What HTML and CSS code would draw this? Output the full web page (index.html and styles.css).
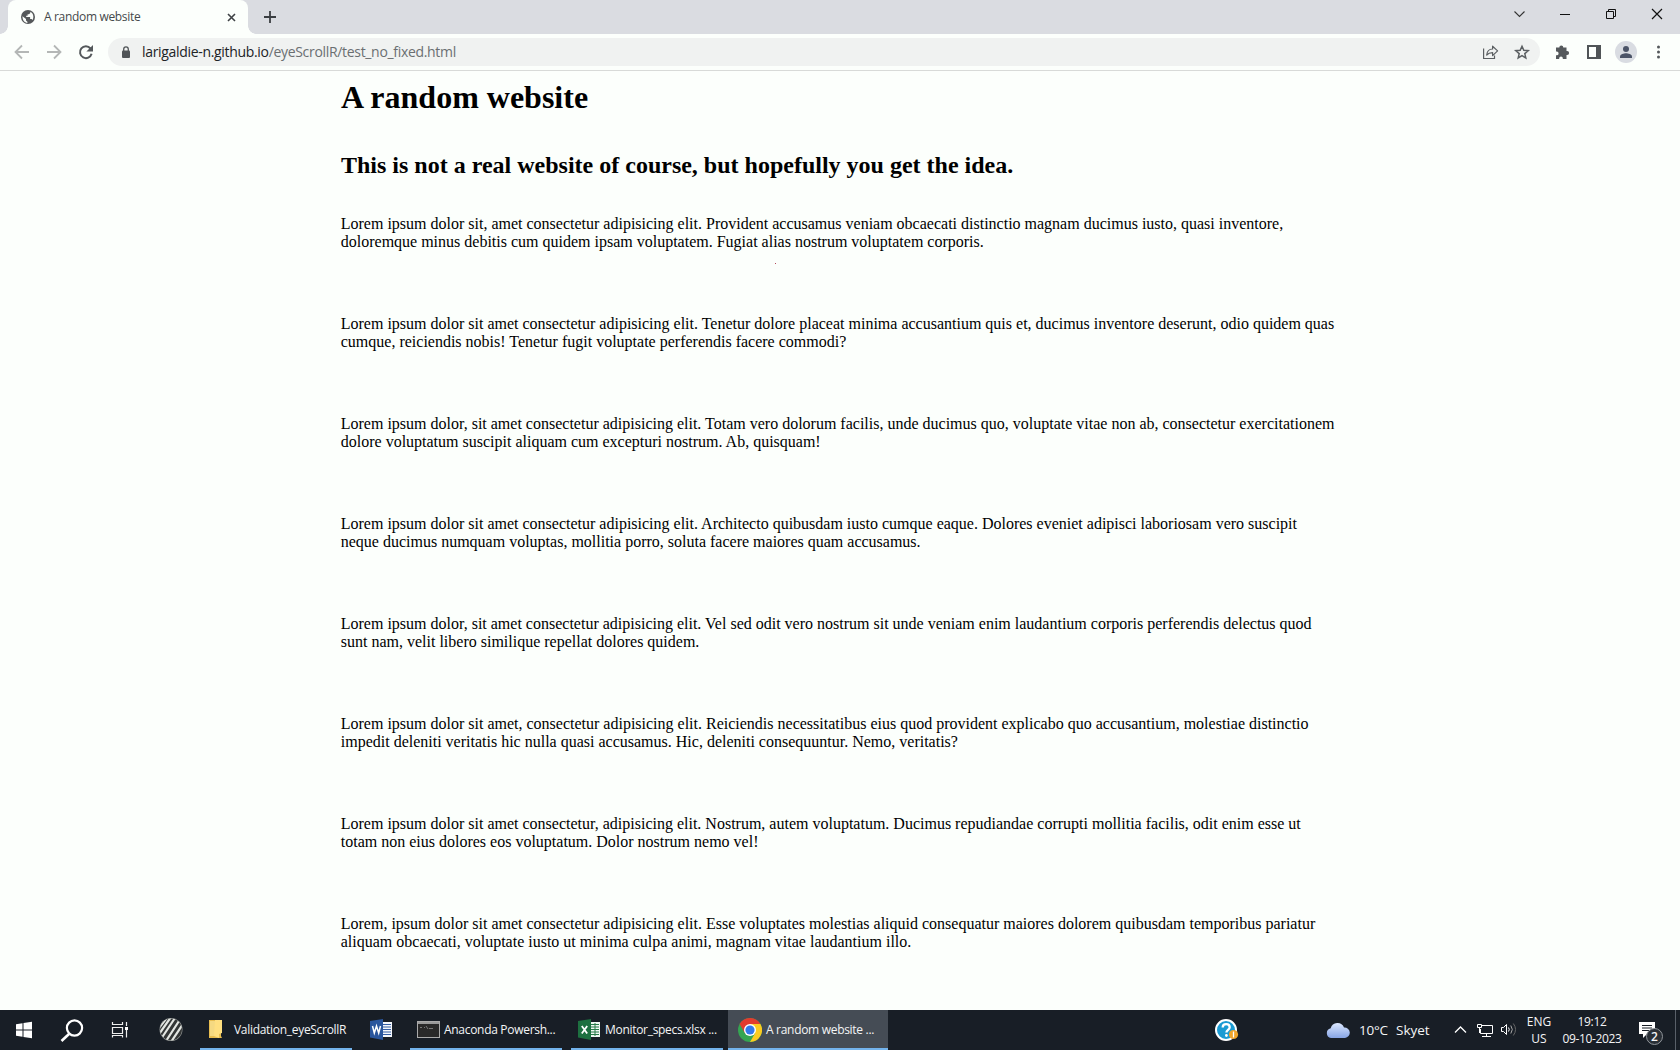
FILE: index.html
```html
<!DOCTYPE html>
<html lang="en">
<head>
<meta charset="utf-8">
<title>A random website</title>
<link rel="stylesheet" href="styles.css">
</head>
<body>
<header class="browser">
  <div class="tabstrip">
    <div class="tab">
      <svg class="globe" width="14" height="14" viewBox="0 0 14 14"><circle cx="7" cy="7" r="7" fill="#55585a"/><path d="M1.5 6.2 5 9v1.6l1.4 1.2v1.1C3.500 12.500 1.300 10 1.500 6.200ZM9.300 1.800v1.300L8 4.300H6.600v1.500H5.200v1.100h3.900v2h1.500l1 1.200c1.500-2.800.9-6.700-2.300-8.300Z" fill="#fbfefb"/></svg>
      <span class="tab-title">A random website</span>
      <svg class="tab-close" width="9" height="9" viewBox="0 0 9 9"><path d="m1 1 7 7M8 1 1 8" stroke="#3e4245" stroke-width="1.6"/></svg>
    </div>
    <svg class="newtab" width="12" height="12" viewBox="0 0 12 12"><path d="M6 0v12M0 6h12" stroke="#3a3e42" stroke-width="1.8"/></svg>
    <div class="window-controls">
      <svg width="46" height="28" viewBox="0 0 46 28"><path d="m18.500 11.500 5 5 5-5" fill="none" stroke="#333" stroke-width="1.100"/></svg>
      <svg width="46" height="28" viewBox="0 0 46 28"><path d="M18 14.500h10" stroke="#111"/></svg>
      <svg width="46" height="28" viewBox="0 0 46 28"><path d="M18.500 11.500h7v7h-7zM20.500 11.500v-2h7v7h-2" fill="none" stroke="#111"/></svg>
      <svg width="46" height="28" viewBox="0 0 46 28"><path d="m18 9 10 10M28 9 18 19" stroke="#111" stroke-width="1.200"/></svg>
    </div>
  </div>
  <div class="toolbar">
    <svg class="nav" width="96" height="36" viewBox="0 0 96 36" fill="none" stroke-width="1.800">
      <path d="M29 18H16M22 11.500 15.500 18l6.500 6.500" stroke="#b4b7b6"/>
      <path d="M47 18h13M54 11.500l6.500 6.500-6.500 6.500" stroke="#b4b7b6"/>
      <path d="M90.500 14.500a5.900 5.900 0 1 0 1.100 5.300" stroke="#54585b" stroke-width="2"/><path d="M93 11v6.600h-6.600Z" fill="#54585b"/>
    </svg>
    <div class="omnibox">
      <svg width="10" height="13" viewBox="0 0 10 13"><rect x="1" y="4.500" width="8" height="7.500" rx="1" fill="#505457"/><path d="M2.700 5V3.200a2.300 2.300 0 0 1 4.600 0V5" fill="none" stroke="#505457" stroke-width="1.300"/></svg>
      <span class="url"><span class="host">larigaldie-n.github.io</span>/eyeScrollR/test_no_fixed.html</span>
      <svg class="omni-icons" width="50" height="28" viewBox="0 0 50 28" fill="none" stroke="#5a5e61"><path d="M.6 10.500v10h10.900v-3" stroke-width="1.200"/><path d="M3.700 17c.4-4.200 2.500-6 5.900-6V8.200l5 4.700-5 4.700v-3c-2.600 0-4.400.6-5.900 2.400Z" stroke-width="1.200" stroke-linejoin="round"/><path d="m39 8.300 1.800 4 4.400.4-3.400 2.900 1 4.300-3.800-2.300-3.800 2.300 1-4.300-3.400-2.900 4.400-.4Z" stroke-width="1.500"/></svg>
    </div>
    <svg class="actions" width="140" height="36" viewBox="0 0 140 36">
      <path d="M16 13.500h3.300a2 2 0 1 1 4 0h3.200V17h.6a2 2 0 1 1 0 4h-.6v4h-3.700v-.7a1.800 1.800 0 0 0-3.600 0v.7H16v-3.700h.7a1.900 1.900 0 0 0 0-3.800H16Z" fill="#55595c"/>
      <path d="M48 12h12v12H48z" fill="none" stroke="#505457" stroke-width="2"/><path d="M56 11h5v14h-5z" fill="#505457"/>
      <circle cx="86" cy="18" r="11" fill="#d9dce2"/><circle cx="86" cy="15" r="3" fill="#4b5467"/><path d="M80 24v-1.500c0-2.400 4-3.300 6-3.300s6 .9 6 3.300V24Z" fill="#4b5467"/>
      <g fill="#54585b"><circle cx="118.500" cy="13" r="1.500"/><circle cx="118.500" cy="18" r="1.500"/><circle cx="118.500" cy="23" r="1.500"/></g>
    </svg>
  </div>
</header>
<main class="page">
  <h1>A random website</h1>
  <h2>This is not a real website of course, but hopefully you get the idea.</h2>
  <p>Lorem ipsum dolor sit, amet consectetur adipisicing elit. Provident accusamus veniam obcaecati distinctio magnam ducimus iusto, quasi inventore,<br>doloremque minus debitis cum quidem ipsam voluptatem. Fugiat alias nostrum voluptatem corporis.<i class="gaze"></i></p>
  <p>Lorem ipsum dolor sit amet consectetur adipisicing elit. Tenetur dolore placeat minima accusantium quis et, ducimus inventore deserunt, odio quidem quas<br>cumque, reiciendis nobis! Tenetur fugit voluptate perferendis facere commodi?</p>
  <p>Lorem ipsum dolor, sit amet consectetur adipisicing elit. Totam vero dolorum facilis, unde ducimus quo, voluptate vitae non ab, consectetur exercitationem<br>dolore voluptatum suscipit aliquam cum excepturi nostrum. Ab, quisquam!</p>
  <p>Lorem ipsum dolor sit amet consectetur adipisicing elit. Architecto quibusdam iusto cumque eaque. Dolores eveniet adipisci laboriosam vero suscipit<br>neque ducimus numquam voluptas, mollitia porro, soluta facere maiores quam accusamus.</p>
  <p>Lorem ipsum dolor, sit amet consectetur adipisicing elit. Vel sed odit vero nostrum sit unde veniam enim laudantium corporis perferendis delectus quod<br>sunt nam, velit libero similique repellat dolores quidem.</p>
  <p>Lorem ipsum dolor sit amet, consectetur adipisicing elit. Reiciendis necessitatibus eius quod provident explicabo quo accusantium, molestiae distinctio<br>impedit deleniti veritatis hic nulla quasi accusamus. Hic, deleniti consequuntur. Nemo, veritatis?</p>
  <p>Lorem ipsum dolor sit amet consectetur, adipisicing elit. Nostrum, autem voluptatum. Ducimus repudiandae corrupti mollitia facilis, odit enim esse ut<br>totam non eius dolores eos voluptatum. Dolor nostrum nemo vel!</p>
  <p>Lorem, ipsum dolor sit amet consectetur adipisicing elit. Esse voluptates molestias aliquid consequatur maiores dolorem quibusdam temporibus pariatur<br>aliquam obcaecati, voluptate iusto ut minima culpa animi, magnam vitae laudantium illo.</p>
</main>
<footer class="taskbar">
  <svg width="200" height="40" viewBox="0 0 200 40">
    <path d="m16 14.200 6.500-1v6.300H16zM23.500 13l8.500-1.200v7.700h-8.500zM16 20.500h6.500v6.300l-6.500-1zM23.500 20.500H32v7.700L23.500 27z" fill="#fff"/>
    <circle cx="74.500" cy="18" r="7.600" fill="none" stroke="#fff" stroke-width="2.200"/><path d="m69 24-7.500 7" stroke="#fff" stroke-width="2.600"/>
    <g fill="none" stroke="#eee" stroke-width="1.200"><path d="M112.500 15v-3M122.500 15v-3M112.500 14.500h10M112.500 17.500h10v6h-10zM112.500 27.500v-2h10v2M126.500 12v4M126.500 20v7.500"/></g><path d="M125 17h3v3h-3z" fill="#fff"/>
    <defs><clipPath id="disc"><circle cx="171" cy="19.500" r="11"/></clipPath></defs>
    <circle cx="171" cy="19.500" r="11.500" fill="#8d918f"/><g clip-path="url(#disc)"><circle cx="171" cy="19.500" r="11" fill="#333636"/><path d="m156 22 13-17M157 27l14-20M161 29l14-21M166 31l13-20M171 32l12-18" stroke="#e3e6e2" stroke-width="2.200"/></g>
  </svg>
  <div class="task folder">
    <svg width="14" height="20" viewBox="0 0 14 20"><path d="M0 1h12v16l1 2H0z" fill="#e8bd50"/><path d="M1 2h6v15H1z" fill="#f5d982"/><path d="M6 1h7v13l-3 1v4l-5-2z" fill="#ffdf80"/></svg>
    <span>Validation_eyeScrollR</span>
  </div>
  <div class="word"><svg width="22" height="21" viewBox="0 0 22 21"><path d="M11 3h11v15H11z" fill="#f4f7fc"/><path d="M13 5.500h8M13 8h8M13 10.500h8M13 13h8M13 15.500h8" stroke="#345ea5"/><path d="M0 2 13 0v21L0 18.500z" fill="#2a569d"/><path d="m2.500 7 1.800 7 2.200-7 2.200 7 1.800-7" fill="none" stroke="#fff" stroke-width="1.500"/></svg></div>
  <div class="task conda">
    <svg width="23" height="17" viewBox="0 0 23 17"><rect x=".5" y=".5" width="22" height="16" fill="#292929" stroke="#aaa"/><path d="M1 1h21v2H1z" fill="#999"/><path d="M3 6.500h2M7 6.500h1M9 5l2 3M12 7.500h4" stroke="#777"/></svg>
    <span>Anaconda Powersh...</span>
  </div>
  <div class="task excel">
    <svg width="22" height="21" viewBox="0 0 22 21"><path d="M11 3h11v15H11z" fill="#eef8f1"/><path d="M13 5.500h8M13 8h8M13 10.500h8M13 13h8M13 15.500h8M17 4v13" stroke="#277b48"/><path d="M0 2 13 0v21L0 18.500z" fill="#1d7040"/><path d="m3.800 7 5.400 7.500M9.200 7l-5.400 7.500" stroke="#fff" stroke-width="1.800"/></svg>
    <span>Monitor_specs.xlsx ...</span>
  </div>
  <div class="task chrome">
    <svg width="24" height="24" viewBox="0 0 24 24"><circle cx="12" cy="12" r="12" fill="#35a552"/><path d="M12 12 1.600 6A12 12 0 0 1 22.400 6Z" fill="#e33b2e"/><path d="M12 6h10.400A12 12 0 0 1 12 24l5.200-9Z" fill="#fbcb20"/><path d="m1.600 6 5.200 9L12 6Z" fill="#e33b2e"/><circle cx="12" cy="12" r="6" fill="#fff"/><circle cx="12" cy="12" r="4.600" fill="#3479ea"/></svg>
    <span>A random website ...</span>
  </div>
  <div class="tray">
    <svg class="help" width="25" height="24" viewBox="0 0 25 24"><circle cx="11" cy="12" r="10" fill="#1b9bd3" stroke="#fff" stroke-width="2"/><path d="M7.700 9.500c0-4.500 7-4.300 7-.2 0 2.500-3.300 2.700-3.300 5.200" fill="none" stroke="#fff" stroke-width="2.300"/><circle cx="11.400" cy="17.500" r="1.400" fill="#fff"/><circle cx="18.500" cy="16.500" r="4.600" fill="#f0a52b"/><path d="M18.500 13.500v6" stroke="#fff" stroke-width="1.300"/></svg>
    <svg class="cloud" width="24" height="16" viewBox="0 0 24 16"><defs><linearGradient id="sky" x2="0" y2="1"><stop stop-color="#dce8ff"/><stop offset="1" stop-color="#86a4e4"/></linearGradient></defs><path d="M5 16a5 5 0 0 1-.3-9.800A7 7 0 0 1 18 5.500 5.200 5.200 0 0 1 19 16Z" fill="url(#sky)"/></svg>
    <span class="temp">10°C</span><span class="sky">Skyet</span>
    <svg class="status" width="64" height="40" viewBox="0 0 64 40" fill="none" stroke="#fff"><path d="m1 22.500 5.500-5.500 5.500 5.500" stroke-width="1.300"/><path d="M28 15.500h10.500v8H26.500V19M32.500 23.500v3M28 26.500h9M23.500 14.500h4v3h-4zM25.500 18v5"/><path d="M47.500 17.500h2l3-3v10l-3-3h-2zM54.500 17.500q1.500 2 0 4"/><path d="M56.800 15.500q3 4 0 8" stroke="#aaa"/><path d="M59.300 13.500q4.500 6 0 12" stroke="#666"/></svg>
    <div class="lang"><span>ENG</span><span>US</span></div>
    <div class="clock"><span class="time">19:12</span><span class="date">09-10-2023</span></div>
    <div class="notes"><svg width="16" height="16" viewBox="0 0 16 16"><path d="M0 0h16v12H8l-4 4v-4H0z" fill="#fff"/><path d="M3 3.500h10M3 6h10M3 8.500h7" stroke="#171d25"/></svg><b>2</b></div>
    <i class="show-desktop"></i>
  </div>
</footer>
</body>
</html>
```
FILE: styles.css
```css
* { box-sizing: border-box; }
body { margin: 0; width: 1680px; height: 1050px; overflow: hidden; display: flex; flex-direction: column; background: #fcfffc; font: 12px/16px "Open Sans", "Noto Sans", sans-serif; }
svg { display: block; flex: none; }
span { white-space: nowrap; }
.browser, .taskbar { flex: none; }
.tabstrip { height: 34px; background: #dadce1; display: flex; padding-left: 8px; }
.tab { width: 240px; height: 34px; background: #fcfffc; border-radius: 8px 8px 0 0; display: flex; align-items: center; padding: 0 12px 0 13px; position: relative; }
.tab::before, .tab::after { content: ""; position: absolute; bottom: 0; width: 8px; height: 8px; }
.tab::before { left: -8px; background: radial-gradient(circle at 0 0, transparent 7.500px, #fcfffc 8px); }
.tab::after { right: -8px; background: radial-gradient(circle at 100% 0, transparent 7.500px, #fcfffc 8px); }
.tab-title { margin-left: 9px; font-size: 12px; letter-spacing: -.33px; color: #45494b; }
.tab-close { margin-left: auto; }
.newtab { margin: 11px 0 0 16px; }
.window-controls { display: flex; margin-left: auto; }
.toolbar { height: 37px; border-bottom: 1px solid #d8dad8; display: flex; }
.nav { margin-right: 12px; }
.omnibox { width: 1432px; height: 28px; margin-top: 4px; border-radius: 14px; background: #f0f2f1; display: flex; align-items: center; padding-left: 13px; }
.url { margin-left: 11px; font-size: 14px; letter-spacing: -.32px; color: #6b6f71; }
.host { color: #202326; }
.omni-icons { margin-left: auto; margin-right: 7px; }
.page { flex: 1; min-height: 0; overflow: hidden; padding: 8px 0 0 341px; font: 16px/18px "Liberation Serif", "Times New Roman", serif; color: #000; }
h1 { margin: 0; font-size: 32px; line-height: 37px; }
h2 { margin: 35px 0 36px; font-size: 24px; line-height: 28px; }
p { margin: 0 0 0 -.25px; height: 100px; white-space: nowrap; position: relative; }
.gaze { position: absolute; left: 434.250px; top: 48px; width: 1px; height: 1px; background: #b64a5c; }
.taskbar { height: 40px; background: #181e26; display: flex; color: #f4f5f6; }
.task { height: 40px; width: 152px; border-bottom: 2px solid #73b3ec; display: flex; align-items: center; letter-spacing: -.3px; }
.task span { padding-top: 2px; }
.folder { padding-left: 9px; }
.folder span { margin-left: 11px; }
.word { width: 58px; padding: 9px 0 0 18px; }
.conda { padding-left: 7px; margin-right: 9px; }
.conda span { margin-left: 4px; }
.excel { padding-left: 7px; margin-right: 5px; }
.excel span { margin-left: 5px; }
.chrome { width: 160px; background: #454c55; padding-left: 10px; }
.chrome svg { margin-top: 2px; }
.chrome span { margin-left: 4px; }
.tray { flex: 1; display: flex; align-items: center; }
.help { margin-left: 327px; }
.cloud { margin-left: 86px; }
.temp { margin-left: 9px; width: 37px; font-size: 13.500px; letter-spacing: -.2px; }
.sky { width: 58px; font-size: 13.500px; }
.lang, .clock { display: flex; flex-direction: column; align-items: center; line-height: 17px; }
.lang { width: 24px; margin-left: 9px; }
.clock { width: 60px; margin-left: 11px; letter-spacing: -.35px; }
.notes { position: relative; margin-left: 17px; }
.notes b { position: absolute; left: 7px; top: 6px; width: 17px; height: 17px; border: 1px solid #90959a; border-radius: 50%; background: #292f36; text-align: center; line-height: 15px; font-size: 12px; font-weight: 600; }
.show-desktop { width: 1px; height: 40px; background: #596069; margin-left: auto; margin-right: 4px; }
```
